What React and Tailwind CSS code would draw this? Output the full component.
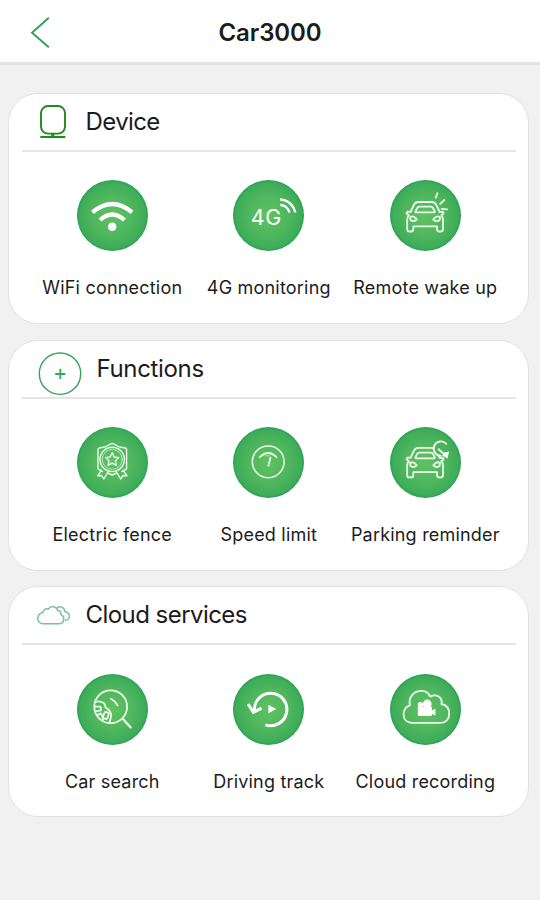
import React from "react";

const LINE = { fill: "none", stroke: "#ecfbe9", strokeWidth: 1.8, strokeLinecap: "round", strokeLinejoin: "round" };

function Disc({ id, children }) {
  return (
    <svg className="block h-[71px] w-[71px]" viewBox="0 0 71 71">
      <defs>
        <radialGradient id={id}>
          <stop offset="0" stopColor="#60c163" />
          <stop offset="0.55" stopColor="#50b75e" />
          <stop offset="0.93" stopColor="#3dac59" />
          <stop offset="1" stopColor="#279f53" />
        </radialGradient>
      </defs>
      <circle cx="35.5" cy="35.5" r="35.5" fill={`url(#${id})`} />
      {children}
    </svg>
  );
}

function Car() {
  return (
    <g {...LINE}>
      <path d="M20.6 32 L23.6 25.5 Q25 22 28.5 22 H41.7 Q45 22 46.6 25.5 L49.7 32 L52.5 31.6 Q54.3 32.5 53 34.2 L51.4 35 Q53 37 53 40 V49.5 Q53 51.5 50.5 51.5 H49.2 Q47.2 51.5 47 49.5 V46.3 H23.3 V49.5 Q23.2 51.5 21 51.5 H19.4 Q17.2 51.5 17.2 49.5 V40 Q17.2 37 18.9 35 L17 34.2 Q15.8 32.5 17.8 31.6 Z" />
      <path d="M29.3 26.7 H41 Q42.3 26.7 43 28 L44.8 31.4 Q45 32.4 44 32.4 H26.1 Q25 32.4 25.4 31.4 L27.2 28 Q28 26.7 29.3 26.7 Z" />
      <path d="M20.2 37 Q23.8 35 26.8 39.5 Q23.5 42.5 20.5 40 Z M50 37 Q46.4 35 43.2 39.5 Q46.5 42.5 49.7 40 Z" />
    </g>
  );
}

const WifiArt = () => (
  <g fill="none" stroke="#fff" strokeWidth="4.3">
    <path d="M15.4 32.4 Q35.3 15.6 55 32.4" />
    <path d="M23 40 Q35.3 28.9 47.4 40" />
    <circle cx="35.2" cy="46.8" r="4.3" fill="#fff" stroke="none" />
  </g>
);

const FourGArt = () => (
  <g>
    <text x="17.8" y="45.3" fill="#fff" className="font-[Inter] text-[21.5px]" textLength="30.5">4G</text>
    <g fill="none" stroke="#fff" strokeWidth="2.2">
      <path d="M47 19.3 Q59.3 20.5 62.4 32.6" />
      <path d="M47.3 24.8 Q54.5 25.6 56.6 32.6" />
    </g>
  </g>
);

const WakeArt = () => (
  <g>
    <Car />
    <path {...LINE} d="M45.8 17.7 L47.4 13.2 M50.2 23.8 L54.3 20 M51.8 28.8 L57.2 29.3" />
  </g>
);

const FenceArt = () => (
  <g {...LINE} strokeWidth="1.4">
    <path d="M21 41.8 V22.8 Q21 21.6 22 21 L26.5 20.2 Q28.5 20 29.8 19 L34 16.8 Q35.2 16.2 36.4 16.8 L40.5 19 Q42 20 44 20.2 L48.4 21 Q49.6 21.6 49.6 22.8 V41.8 L45 44.6 M21 41.8 L25.5 44.6" />
    <circle cx="35.2" cy="32.4" r="12.2" />
    <circle cx="35.2" cy="32.4" r="10" strokeWidth="0.7" />
    <path d="M35.2 25.8 L37.2 30 L41.8 30.6 L38.4 33.8 L39.3 38.3 L35.2 36.1 L31.1 38.3 L32 33.8 L28.6 30.6 L33.2 30 Z" />
    <path d="M24.2 43.3 L20.7 48.8 L24.6 48.5 L26.8 52 L31 44.8 M46.2 43.3 L50 48.8 L46 48.5 L43.7 52 L39.4 44.8 M30.7 46 L35.2 48 L39.8 46" />
  </g>
);

const SpeedArt = () => (
  <g {...LINE} strokeWidth="1.5">
    <circle cx="35.2" cy="34.8" r="15.9" />
    <path d="M27 30 Q35.2 21.8 43.4 30" strokeWidth="1.9" />
    <path d="M37.5 30.5 L35.4 38.7" strokeWidth="1.7" />
    <path d="M32.3 28.8 H36.5" strokeWidth="0.6" />
  </g>
);

const ParkingArt = () => (
  <g>
    <g transform="translate(0 -1.1)"><Car /></g>
    <circle cx="50" cy="22" r="7.2" fill="#4ab35c" />
    <path {...LINE} strokeWidth="1.9" d="M56.3 16.8 A7.2 7.2 0 1 0 50.5 28.8 M48.6 22.2 L54.5 27.6" />
    <path d="M59 24.6 L57.5 31.4 L52.2 28.5 L54 25.5 Z" fill="#fff" />
  </g>
);

const SearchArt = () => (
  <g {...LINE}>
    <circle cx="33.7" cy="32.8" r="16.4" />
    <path d="M46 45 L53.7 53.4" strokeWidth="2.2" />
    <path d="M34 24.8 Q37.5 26.5 40.5 31.4" />
    <path d="M18 27.8 Q24 26.2 27.4 29.6 L28.6 33.4 Q34.6 37 34.2 42.5 L32.4 48.6" />
    <path d="M18.4 32.6 H22.6 Q24.4 33.2 23.9 36.3 L18.6 37.4" />
    <path d="M20.6 41 L23.6 39.4 Q25.6 41 26 45.6" />
    <rect x="26.6" y="38.2" width="4.6" height="6.6" rx="1.6" transform="rotate(20 28.9 41.5)" />
  </g>
);

const TrackArt = () => (
  <g fill="none" stroke="#fff" strokeWidth="3">
    <path d="M32.4 50.8 A16.2 16.2 0 1 0 21.6 37.5" />
    <path d="M15 30 L20.5 38.3 L28.6 34.2" />
    <path d="M35.4 31 L43.4 35.1 L35.4 39.3 Z" fill="#fff" stroke="none" />
  </g>
);

const RecordingArt = () => (
  <g>
    <path {...LINE} d="M21.8 48.8 C16.5 48.5 13.6 44.8 13.6 40.5 C13.6 36.2 16 32.8 19.8 31.4 C18.2 22.8 24.3 16.8 31.3 16.8 C35.5 16.8 38.7 19 40.3 22.6 C46.2 19.3 53 23.2 51.4 30 C56.2 31 59.2 34.8 59.2 39.8 C59.2 45.2 55.8 48.8 50.7 48.8 Z" />
    <g fill="#fff">
      <circle cx="30.4" cy="30.7" r="2.6" />
      <circle cx="37.2" cy="30" r="4.4" />
      <rect x="27.8" y="32.5" width="14.1" height="9.4" rx="0.8" />
      <path d="M41 37 L45.4 34.8 V41.6 L41 39.5 Z" />
    </g>
  </g>
);

const DeviceGlyph = () => (
  <svg className="ml-[30px] h-[36px] w-[28px]" viewBox="0 0 28 36" fill="none" stroke="#20891f">
    <rect x="2" y="2" width="24" height="27.6" rx="7" strokeWidth="1.9" />
    <path d="M13.8 30 V33" strokeWidth="3" />
    <path d="M1.3 33 H26.3" strokeWidth="2.1" />
  </svg>
);

const PlusGlyph = () => (
  <svg className="ml-[28.5px] mt-[10px] h-[44px] w-[44px]" viewBox="0 0 44 44" fill="none" stroke="#35a45b">
    <circle cx="22" cy="21.7" r="20.7" strokeWidth="1.4" />
    <path d="M17.2 22 H27.3 M22.3 16.7 V27.1" strokeWidth="1.8" />
  </svg>
);

const CloudsGlyph = () => (
  <svg className="ml-[28px] h-[22px] w-[34px]" viewBox="0 0 34 22" fill="none" stroke="#79c397" strokeWidth="1.5" strokeLinejoin="round">
    <path d="M6.3 19.7 C2.8 19.7 .8 17.5 .8 14.8 C.8 11.8 2.7 9.3 5.8 8.6 C6.3 5.4 8.9 4.2 11.4 5 C14 1.5 19.2 1.8 20.6 6.4 C23 6.4 24.3 8 23.8 10.4 C28.4 12.8 27.6 19.7 22.3 19.7 Z" />
    <path d="M19.8 3.9 C23 1.6 27.2 3 27.9 7.6 C31.4 8.4 33.6 11.2 31.8 13.9 C31.2 15.8 29.8 16.6 28 16.2" />
  </svg>
);

const SECTIONS = [
  {
    title: "Device", Glyph: DeviceGlyph, glyphBox: "w-[76.5px]", track: "tracking-[-0.6px]",
    items: [
      { label: "WiFi connection", Art: WifiArt },
      { label: "4G monitoring", Art: FourGArt },
      { label: "Remote wake up", Art: WakeArt },
    ],
  },
  {
    title: "Functions", Glyph: PlusGlyph, glyphBox: "w-[87.5px]", track: "tracking-[-0.35px]",
    items: [
      { label: "Electric fence", Art: FenceArt },
      { label: "Speed limit", Art: SpeedArt },
      { label: "Parking reminder", Art: ParkingArt },
    ],
  },
  {
    title: "Cloud services", Glyph: CloudsGlyph, glyphBox: "w-[76.5px]", track: "tracking-[-0.55px]",
    items: [
      { label: "Car search", Art: SearchArt },
      { label: "Driving track", Art: TrackArt },
      { label: "Cloud recording", Art: RecordingArt },
    ],
  },
];

function Section({ title, Glyph, glyphBox, track, items }) {
  return (
    <section className="h-[231px] rounded-[30px] border border-[#e2e2e2] bg-white">
      <div className="mr-[12px] ml-[13px] h-[58px] border-b-2 border-[#e5e5e5]">
        <div className="-ml-[13px] flex h-[56px] items-center">
          <div className={`flex shrink-0 ${glyphBox}`}><Glyph /></div>
          <h2 className={`whitespace-nowrap text-[24px] leading-[30px] text-[#1c1c1c] ${track}`}>{title}</h2>
        </div>
      </div>
      <div className="mr-[24.4px] ml-[25px] grid grid-cols-3 pt-[28.2px]">
        {items.map(({ label, Art }) => (
          <div key={label} className="flex flex-col items-center">
            <Disc id={label.replaceAll(" ", "-")}><Art /></Disc>
            <span className="mt-[25px] whitespace-nowrap text-[18px] leading-[24px] tracking-[0.2px] text-[#1c1c1c]">{label}</span>
          </div>
        ))}
      </div>
    </section>
  );
}

export default function App() {
  return (
    <div className="h-[900px] w-[540px] overflow-hidden bg-[#f1f1f1] font-[Inter,sans-serif]">
      <header className="grid h-[65px] grid-cols-[80px_1fr_80px] items-center border-b-[3px] border-[#e2e2e2] bg-white pt-[3px]">
        <svg className="ml-[30px] h-[32px] w-[20px]" viewBox="0 0 20 32" fill="none" stroke="#30a353" strokeWidth="1.9">
          <path d="M18.8 0.7 L2 15.7 L18.8 30.2" />
        </svg>
        <h1 className="text-center text-[24px] leading-[30px] font-semibold tracking-[-0.1px] text-[#1c1c1c]">Car3000</h1>
      </header>
      <main className="flex flex-col gap-[15.7px] pt-[28px] pr-[11px] pl-[8px]">
        {SECTIONS.map((section) => <Section key={section.title} {...section} />)}
      </main>
    </div>
  );
}
